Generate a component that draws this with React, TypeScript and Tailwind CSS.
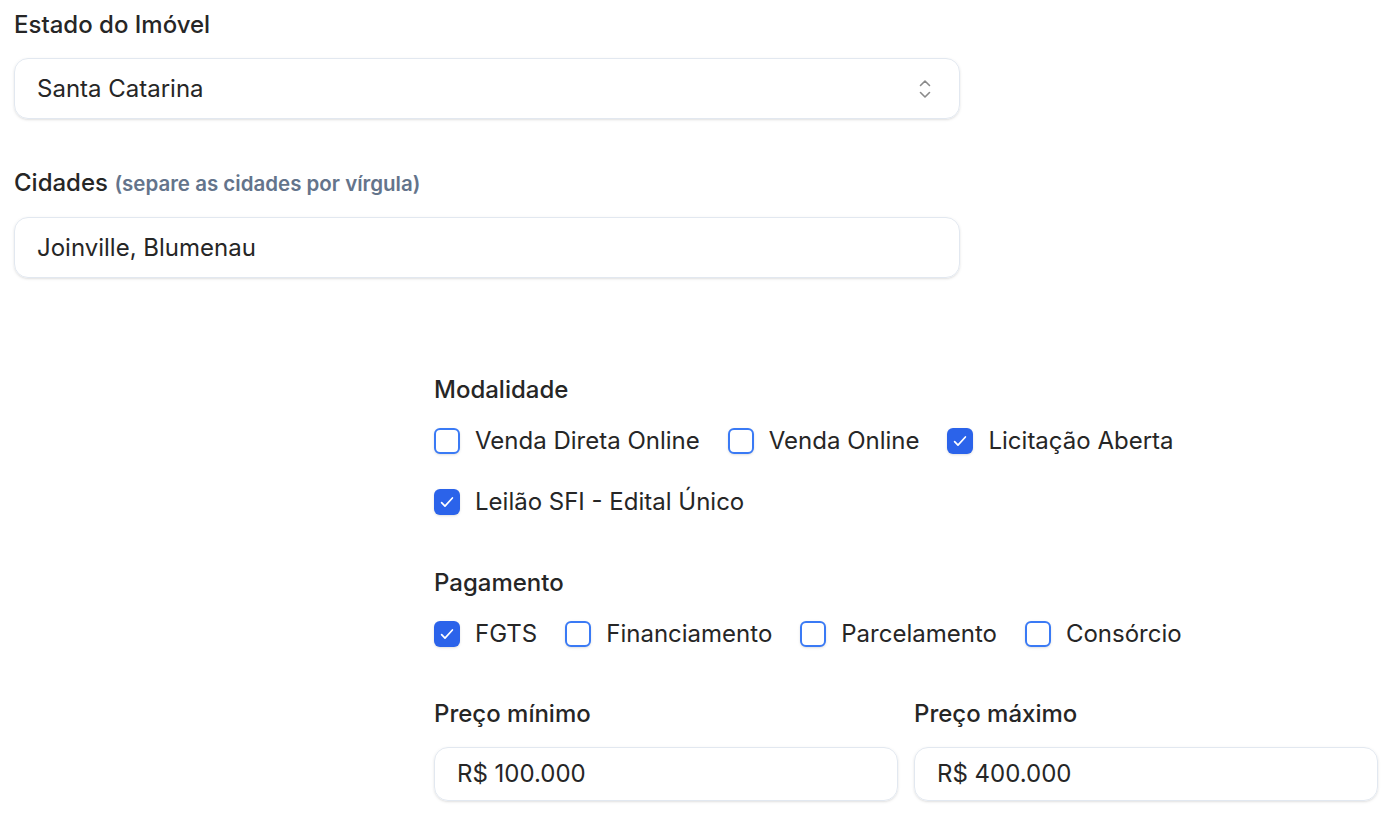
import React from 'react';

const Checkbox = ({ label, checked }: { label: string; checked?: boolean }) => (
  <label className="flex items-center gap-[15px] h-[32px]">
    <span
      className={
        checked
          ? 'w-[26px] h-[26px] rounded-[6px] bg-[#2b63ea] flex items-center justify-center shadow-sm'
          : 'w-[26px] h-[26px] rounded-[6px] border-2 border-[#3a7af5] bg-white shadow-sm'
      }
    >
      {checked && (
        <svg width="18" height="18" viewBox="0 0 16 16" fill="none">
          <path d="M3.2 8.6l3 3.1L12.8 4.4" stroke="white" strokeWidth="1.5" strokeLinecap="round" strokeLinejoin="round" />
        </svg>
      )}
    </span>
    <span className="text-[24px] leading-[32px]">{label}</span>
  </label>
);

const Label = ({ children }: { children: React.ReactNode }) => (
  <div className="text-[24px] leading-[32px] font-medium">{children}</div>
);

export default function App() {
  return (
    <div className="w-[1392px] h-[820px] bg-white text-[#262626] font-['Inter',sans-serif] overflow-hidden">
      <div className="w-[960px] pl-[14px] pt-[9px]">
        <Label>Estado do Imóvel</Label>
        <div className="mt-[17px] h-[61px] rounded-[14px] border border-[#e2e8f0] shadow-sm flex items-center justify-between pl-[22px] pr-[28px]">
          <span className="text-[24px]">Santa Catarina</span>
          <svg width="12" height="20" viewBox="0 0 12 20" fill="none" className="text-[#8a8a8a]">
            <path d="M1.5 6.5l4.5-4.5 4.5 4.5" stroke="currentColor" strokeWidth="1.6" strokeLinecap="round" strokeLinejoin="round" />
            <path d="M1.5 13.5l4.5 4.5 4.5-4.5" stroke="currentColor" strokeWidth="1.6" strokeLinecap="round" strokeLinejoin="round" />
          </svg>
        </div>

        <div className="mt-[48px]">
          <Label>
            Cidades{' '}
            <span className="text-[20.5px] font-semibold text-[#64748b]">(separe as cidades por vírgula)</span>
          </Label>
        </div>
        <div className="mt-[17px] h-[61px] rounded-[14px] border border-[#e2e8f0] shadow-sm flex items-center pl-[22px]">
          <span className="text-[24px]">Joinville, Blumenau</span>
        </div>
      </div>

      <div className="ml-[434px] w-[944px] mt-[96px]">
        <Label>Modalidade</Label>
        <div className="mt-[19px] flex flex-wrap gap-x-[28px] gap-y-[29px]">
          <Checkbox label="Venda Direta Online" />
          <Checkbox label="Venda Online" />
          <Checkbox label="Licitação Aberta" checked />
          <Checkbox label="Leilão SFI - Edital Único" checked />
        </div>

        <div className="mt-[49px]">
          <Label>Pagamento</Label>
        </div>
        <div className="mt-[19px] flex flex-wrap gap-x-[28px] gap-y-[29px]">
          <Checkbox label="FGTS" checked />
          <Checkbox label="Financiamento" />
          <Checkbox label="Parcelamento" />
          <Checkbox label="Consórcio" />
        </div>

        <div className="mt-[48px] grid grid-cols-2 gap-x-[16px]">
          <div>
            <Label>Preço mínimo</Label>
            <div className="mt-[17px] h-[54px] rounded-[14px] border border-[#e2e8f0] shadow-sm flex items-center pl-[22px]">
              <span className="text-[24px]">R$ 100.000</span>
            </div>
          </div>
          <div>
            <Label>Preço máximo</Label>
            <div className="mt-[17px] h-[54px] rounded-[14px] border border-[#e2e8f0] shadow-sm flex items-center pl-[22px]">
              <span className="text-[24px]">R$ 400.000</span>
            </div>
          </div>
        </div>
      </div>
    </div>
  );
}
